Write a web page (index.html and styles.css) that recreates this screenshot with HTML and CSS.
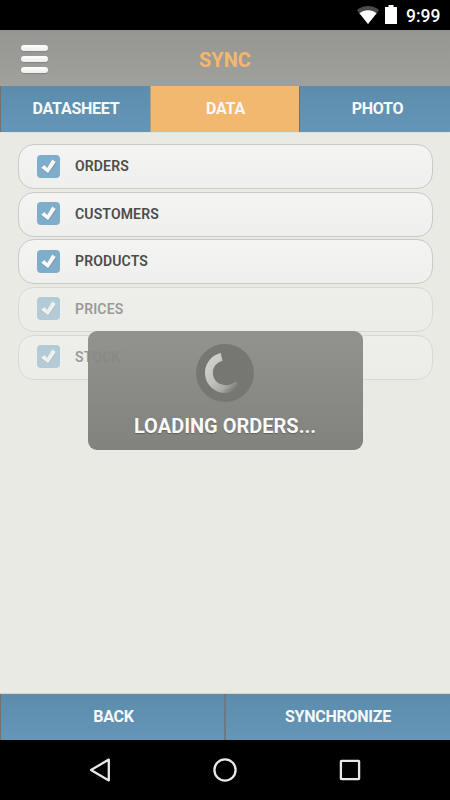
FILE: index.html
```html
<!DOCTYPE html>
<html lang="en">
<head>
<meta charset="utf-8">
<title>Sync</title>
<link rel="stylesheet" href="styles.css">
</head>
<body>
<svg class="defs" width="0" height="0" aria-hidden="true">
  <symbol id="check" viewBox="0 0 23 23"><path d="M4.2 12.7 7.4 10l2.8 2.9 5.1-8.3 3.5 2.5-7.7 11.1Z" fill="#5f7a8a" stroke="#5f7a8a" opacity=".4" transform="translate(.3 .7)"/><path d="M4.2 12.7 7.4 10l2.8 2.9 5.1-8.3 3.5 2.5-7.7 11.1Z" fill="#f7f7f4"/></symbol>
</svg>
<div class="screen">
  <div class="status">
    <svg class="wifi" viewBox="0 0 22 18" width="22" height="18"><path d="M0 4.3C6-1.3 16-1.3 22 4.3L11 18Z" fill="#4b4b4b"/><path d="M2.4 7.2C7.2 3.2 14.8 3.2 19.6 7.2L11 18Z" fill="#fff"/></svg>
    <svg class="battery" viewBox="0 0 12 19" width="12" height="19"><path d="M3.5 0h5v2H12v17H0V2h3.5Z" fill="#fff"/></svg>
    <span class="clock">9:99</span>
  </div>
  <header class="header">
    <div class="menu"><i></i><i></i><i></i></div>
    <h1>SYNC</h1>
  </header>
  <nav class="tabs">
    <div class="tab"><span>DATASHEET</span></div>
    <div class="tab active"><span>DATA</span></div>
    <div class="tab"><span>PHOTO</span></div>
  </nav>
  <main class="content">
    <div class="row"><span class="box"><svg><use href="#check"/></svg></span><span>ORDERS</span></div>
    <div class="row"><span class="box"><svg><use href="#check"/></svg></span><span>CUSTOMERS</span></div>
    <div class="row"><span class="box"><svg><use href="#check"/></svg></span><span>PRODUCTS</span></div>
    <div class="row off"><span class="box"><svg><use href="#check"/></svg></span><span>PRICES</span></div>
    <div class="row off"><span class="box"><svg><use href="#check"/></svg></span><span>STOCK</span></div>
  </main>
  <footer class="actions">
    <div class="action"><span>BACK</span></div>
    <div class="action"><span>SYNCHRONIZE</span></div>
  </footer>
  <div class="navbar">
    <svg viewBox="0 0 24 26" width="24" height="26"><path d="M20.8 2.6v20.8L3 13Z"/></svg>
    <svg viewBox="0 0 26 26" width="26" height="26"><circle cx="13" cy="13" r="10.6"/></svg>
    <svg viewBox="0 0 26 26" width="26" height="26"><rect x="3.9" y="3.9" width="18.2" height="18.2" rx=".5"/></svg>
  </div>
  <div class="dialog">
    <svg class="spinner" viewBox="0 0 58 58" width="58" height="58">
      <defs><linearGradient id="fade" gradientUnits="userSpaceOnUse" x1="16" y1="18" x2="42" y2="42"><stop offset="0" stop-color="#cdcdca"/><stop offset=".4" stop-color="#c0c0bd"/><stop offset=".75" stop-color="#a8a8a4"/><stop offset="1" stop-color="#767672"/></linearGradient></defs>
      <circle cx="29" cy="29" r="29" fill="#767672"/>
      <path d="M25.6 12.9A16.3 16.3 0 0 0 29 45.1Q37 45 42.5 40.5" fill="none" stroke="url(#fade)" stroke-width="7.8"/>
    </svg>
    <p>LOADING ORDERS...</p>
  </div>
</div>
</body>
</html>
```

FILE: styles.css
```css
* { box-sizing: border-box; }
body { margin: 0; font-family: Roboto, "Liberation Sans", sans-serif; }
.defs { position: absolute; }
.screen { position: relative; width: 450px; height: 800px; display: flex; flex-direction: column; background: #e9eae4; overflow: hidden; }
.status { height: 30px; background: #000; display: flex; justify-content: flex-end; padding: 5px 10px 0 0; }
.wifi { margin-top: 1px; }
.battery { margin: 0 9px 0 6px; }
.clock { color: #fff; font-size: 17.5px; font-weight: 500; line-height: 22px; width: 34px; white-space: nowrap; }
.header { height: 56px; display: flex; align-items: center; justify-content: center; background: linear-gradient(#959592, #a0a09d); position: relative; }
.header h1 { margin: 4px 0 0; font-size: 20px; font-weight: 700; line-height: 24px; color: #f4b76d; }
.menu { position: absolute; left: 20.5px; top: 15px; display: flex; flex-direction: column; gap: 5px; }
.menu i { width: 27.5px; height: 6px; border-radius: 3px; background: linear-gradient(#fff, #ecece9); box-shadow: 0 1px 1px #858583; }
.tabs { height: 46px; display: grid; grid-template-columns: 150px 149px 151px; flex: none; }
.tab, .action { display: flex; align-items: center; justify-content: center; color: #f8f8f6; font-size: 16px; letter-spacing: -.25px; font-weight: 700; line-height: 20px; background: linear-gradient(#5d8cab, #6496b8); border-left: 1px solid #776f68; padding-bottom: 1px; padding-left: 1px; }
.tab.active { background: #f3b86f; border-left-color: #b99b78; }
.tab:last-child { padding-left: 5px; }
.content { flex: 1; border-top: 1px solid #dfe3e0; border-bottom: 1px solid #d5d6d1; padding: 11px 17.5px 0; display: flex; flex-direction: column; gap: 2.65px; background: #e9eae4; }
.row { flex: none; height: 45px; border: 1px solid #c9cac8; border-radius: 16px; background: linear-gradient(#f4f4f3, #efefed); display: flex; align-items: center; gap: 15px; padding-left: 18.5px; font-size: 14px; letter-spacing: .15px; font-weight: 600; color: #4c4c4a; }
.row > span:last-child { margin-top: -1px; }
.row.off { opacity: .5; }
.box { width: 23px; height: 23px; margin-top: -1px; border-radius: 4px; background: #7fadcc; }
.box svg { display: block; width: 23px; height: 23px; }
.actions { height: 46px; flex: none; display: grid; grid-template-columns: 224px 226px; }
.action { padding-left: 2px; }
.action:last-child { border-left: 2px solid #6c7883; padding-left: 0; }
.navbar { height: 60px; flex: none; background: #000; display: flex; align-items: center; justify-content: space-between; padding: 0 87px 0 88px; }
.navbar svg { fill: none; stroke: #e8e8e8; stroke-width: 2.3; stroke-linejoin: round; }
.dialog { position: absolute; left: 87.5px; top: 331px; width: 275px; height: 119px; border-radius: 9px; background: linear-gradient(rgba(139,139,135,.93), rgba(124,124,120,.95)); display: flex; flex-direction: column; align-items: center; padding-top: 13px; }
.dialog p { margin: 12px 0 0; font-size: 20px; line-height: 24px; font-weight: 700; color: #fafaf8; text-shadow: 0 1px 1px rgba(60,60,60,.5); white-space: nowrap; }
```
